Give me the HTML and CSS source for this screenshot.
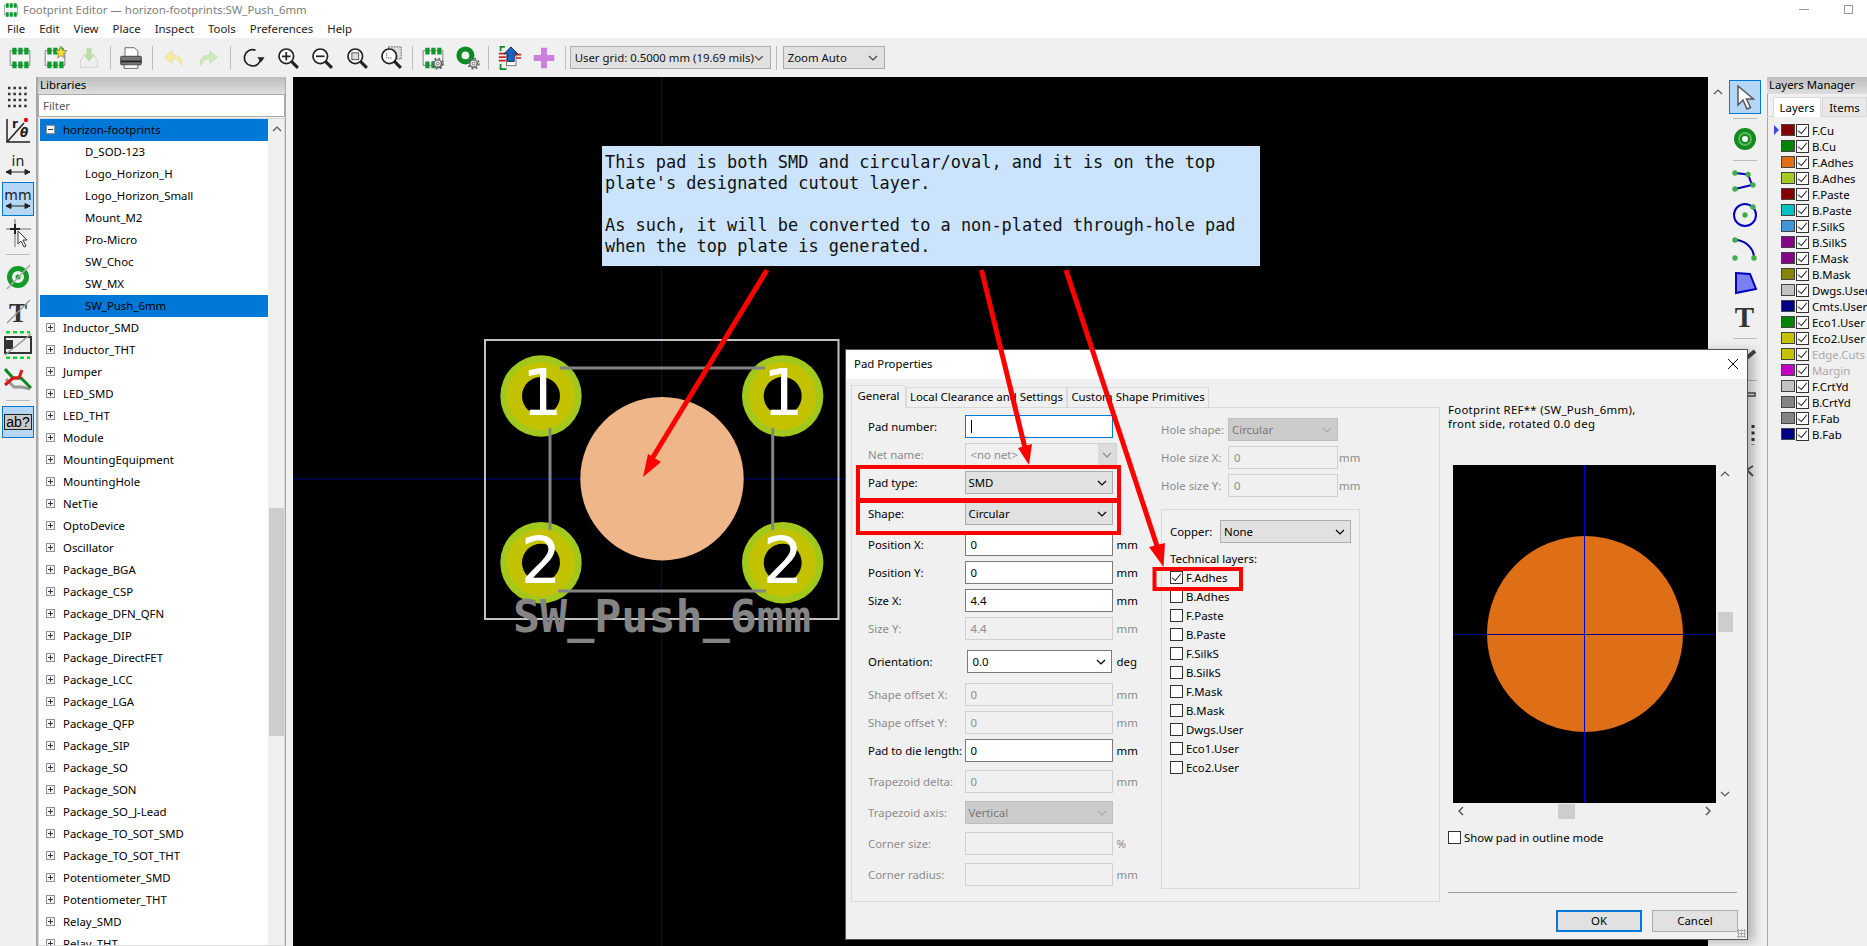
FILE: index.html
```html
<!DOCTYPE html>
<html lang="en">
<head>
    <meta charset="UTF-8">
    <title>Footprint Editor — horizon-footprints:SW_Push_6mm</title>
    <link rel="stylesheet" href="styles.css">
</head>
<body>

<!-- shared icons -->
<svg class="defs" width="0" height="0">
    <symbol id="chev" viewBox="0 0 10 6"><path d="M1 1l4 4 4-4" fill="none" stroke="currentColor" stroke-width="1.2"/></symbol>
    <symbol id="fp" viewBox="0 0 28 28">
        <rect x="2.5" y="5.5" width="23" height="17" fill="#f4f4f4" stroke="#777"/>
        <path d="M5 2h5v8H5zM12 2h5v8h-5zM19 2h5v8h-5zM5 18h5v8H5zM12 18h5v8h-5zM19 18h5v8h-5z" fill="#0c9a2c"/>
    </symbol>
    <symbol id="mag" viewBox="0 0 28 28">
        <circle cx="12" cy="12" r="8.5" fill="#fff" stroke="#222" stroke-width="2"/>
        <path d="M18 18l7.500 7.500" stroke="#222" stroke-width="3.500"/>
    </symbol>
    <symbol id="gear" viewBox="0 0 14 14">
        <circle cx="7" cy="7" r="4" fill="#eee" stroke="#666" stroke-width="1.500"/>
        <circle cx="7" cy="7" r="5.700" fill="none" stroke="#666" stroke-width="2" stroke-dasharray="2 2.500"/>
        <circle cx="7" cy="7" r="1.500" fill="#fff" stroke="#666"/>
    </symbol>
</svg>

<div class="titlebar">
    <svg class="title-icon" width="16" height="16"><use href="#fp"/></svg>
    <span class="title-text">Footprint Editor — horizon-footprints:SW_Push_6mm</span>
    <span class="win-min"></span>
    <span class="win-max"></span>
</div>

<div class="menubar">
    <span>File</span><span>Edit</span><span>View</span><span>Place</span><span>Inspect</span><span>Tools</span><span>Preferences</span><span>Help</span>
</div>

<div class="toolbar">
    <svg class="tb" viewBox="0 0 28 28"><use href="#fp"/></svg>
    <svg class="tb" viewBox="0 0 28 28"><use href="#fp"/><path d="M21 0l2 5 5 .5-4 3.500 1 5-4-2.700-4 2.700 1-5-4-3.500 5-.5z" fill="#f6dc2e" stroke="#555" stroke-width=".6"/></svg>
    <svg class="tb" viewBox="0 0 28 28"><path d="M4 17l4-6h12l4 6v8H4z" fill="#eee" stroke="#ccc"/><path d="M11 2h6v8h4l-7 8-7-8h4z" fill="#bcdcaa"/></svg>
    <span class="sep"></span>
    <svg class="tb" viewBox="0 0 28 28"><path d="M7 2h11l4 4v8H7z" fill="#fff" stroke="#555"/><rect x="2" y="12" width="24" height="10" rx="1" fill="#777" stroke="#333"/><rect x="2" y="17" width="24" height="2" fill="#222"/><rect x="6" y="22" width="16" height="4" fill="#fff" stroke="#555"/></svg>
    <span class="sep"></span>
    <svg class="tb" viewBox="0 0 28 28"><path d="M23 23c1-9-4-13-11-12V6L3 13l9 7v-5c5-1 8 2 11 8z" fill="#f7e8a4" stroke="#eedc90"/></svg>
    <svg class="tb" viewBox="0 0 28 28"><path d="M5 23c-1-9 4-13 11-12V6l9 7-9 7v-5c-5-1-8 2-11 8z" fill="#cfe9bb" stroke="#c0dfa8"/></svg>
    <span class="sep sep-wide"></span>
    <svg class="tb" viewBox="0 0 28 28"><path d="M17 5a9.500 9.500 0 1 0 6 9" fill="none" stroke="#222" stroke-width="2"/><path d="M19 13l4.500 6 4-6z" fill="#222"/></svg>
    <svg class="tb" viewBox="0 0 28 28"><use href="#mag"/><path d="M7 12h10M12 7v10" stroke="#222" stroke-width="2"/></svg>
    <svg class="tb" viewBox="0 0 28 28"><use href="#mag"/><path d="M7 12h10" stroke="#222" stroke-width="2"/></svg>
    <svg class="tb" viewBox="0 0 28 28"><use href="#mag"/><rect x="8" y="8" width="8" height="8" fill="#ddd" stroke="#444"/></svg>
    <svg class="tb" viewBox="0 0 28 28"><rect x="11" y="1" width="15" height="14" fill="#ddd" stroke="#555" stroke-dasharray="2 1"/><use href="#mag"/><path d="M9 8v6h6" fill="none" stroke="#444" stroke-dasharray="1.500 1"/></svg>
    <span class="sep"></span>
    <svg class="tb" viewBox="0 0 28 28"><use href="#fp"/><use href="#gear" x="12" y="13" width="15" height="15"/></svg>
    <svg class="tb" viewBox="0 0 28 28"><circle cx="11" cy="11" r="7.500" fill="none" stroke="#0c8a24" stroke-width="6"/><use href="#gear" x="13" y="13" width="15" height="15"/></svg>
    <span class="sep"></span>
    <svg class="tb" viewBox="0 0 28 28"><path d="M8 1H3v5M3 21v6h7" fill="none" stroke="#0a8a1e" stroke-width="2"/><path d="M1 9h8M1 13h8M1 17h8M20 10h7M20 14h7" stroke="#d02020" stroke-width="2"/><rect x="10" y="11" width="11" height="12" fill="#fff" stroke="#666"/><path d="M15 1l8 8h-4v9h-8V9H7z" fill="#1c62c4" stroke="#123"/></svg>
    <svg class="tb" viewBox="0 0 28 28"><path d="M10.500 2h7v8.500H26v7h-8.500V26h-7v-8.500H2v-7h8.500z" fill="#cc80dd"/></svg>
    <span class="sep sep-last"></span>
    <div class="tb-select grid-select"><span>User grid: 0.5000 mm (19.69 mils)</span><svg width="10" height="6"><use href="#chev"/></svg></div>
    <span class="sep sep-select"></span>
    <div class="tb-select zoom-select"><span>Zoom Auto</span><svg width="10" height="6"><use href="#chev"/></svg></div>
</div>

<div class="main">

    <!-- left tools -->
    <div class="ltool">
        <div class="tool"><svg width="26" height="26" viewBox="0 0 26 26"><path d="M3 4h20M3 10h20M3 16h20M3 22h20" stroke="#333" stroke-width="2.500" stroke-dasharray="2.500 2.900"/></svg></div>
        <div class="tool"><svg width="28" height="28" viewBox="0 0 28 28"><path d="M3 2v23h23M3 25L20 6" fill="none" stroke="#222" stroke-width="1.500"/><text x="8" y="11" class="ic-r">r</text><text x="16" y="20" class="ic-th">θ</text><circle cx="22" cy="3" r="2.200" fill="#e01010"/></svg></div>
        <div class="tool"><svg width="28" height="26" viewBox="0 0 28 26"><text x="14" y="14" class="ic-unit">in</text><path d="M2 20h24M2 20l5-2.500v5zM26 20l-5-2.500v5z" stroke="#222" fill="#222"/></svg></div>
        <div class="tool on"><svg width="28" height="26" viewBox="0 0 28 26"><text x="14" y="14" class="ic-unit">mm</text><path d="M2 20h24M2 20l5-2.500v5zM26 20l-5-2.500v5z" stroke="#222" fill="#222"/></svg></div>
        <div class="tool"><svg width="28" height="30" viewBox="0 0 28 30"><path d="M11 1v28M2 11h25" stroke="#999" stroke-width="1.500"/><path d="M6 11h10M11 6v10" stroke="#222" stroke-width="2"/><path d="M14 13v13l3-3 3 6 2-1-3-6h4z" fill="#fff" stroke="#333"/></svg></div>
        <span class="hsep"></span>
        <div class="tool via-tool"><svg width="28" height="28" viewBox="0 0 28 28"><circle cx="14" cy="14" r="8.500" fill="none" stroke="#129a2a" stroke-width="5"/><circle cx="14" cy="14" r="2.500" fill="#129a2a"/><path d="M3 26L26 2" stroke="#aaa" stroke-width="1.500"/></svg></div>
        <div class="tool"><svg width="28" height="32" viewBox="0 0 28 32"><text x="14" y="27" class="ic-t">T</text><path d="M3 28L26 5" stroke="#999" stroke-width="1.500"/></svg></div>
        <div class="tool"><svg width="30" height="28" viewBox="0 0 30 28"><path d="M3 1h24" stroke="#18d030" stroke-width="3" stroke-dasharray="4 3"/><path d="M3 27h24" stroke="#18d030" stroke-width="3" stroke-dasharray="4 3"/><rect x="2" y="6" width="26" height="16" fill="#eee" stroke="#333" stroke-width="2"/><rect x="3" y="9" width="7" height="9" fill="#333"/><path d="M2 24L28 3" stroke="#999" stroke-width="1.500"/></svg></div>
        <div class="tool"><svg width="28" height="24" viewBox="0 0 28 24"><path d="M2 12l8 8h8l8 2" fill="none" stroke="#999" stroke-width="3"/><path d="M1 2l8 9h8l10 10" fill="none" stroke="#0a8a1e" stroke-width="3"/><path d="M1 18l8-7h6l3-8" fill="none" stroke="#d81818" stroke-width="3"/></svg></div>
        <span class="hsep"></span>
        <div class="tool on ab-tool"><span class="ab">ab?</span></div>
    </div>

    <!-- library tree -->
    <div class="libs">
        <div class="panel-head">Libraries</div>
        <div class="filter">Filter</div>
        <div class="tree">
            <div class="tree-list">
                <div class="node sel"><i class="exp minus"></i>horizon-footprints</div>
                <div class="node child">D_SOD-123</div>
                <div class="node child">Logo_Horizon_H</div>
                <div class="node child">Logo_Horizon_Small</div>
                <div class="node child">Mount_M2</div>
                <div class="node child">Pro-Micro</div>
                <div class="node child">SW_Choc</div>
                <div class="node child">SW_MX</div>
                <div class="node child sel">SW_Push_6mm</div>
                <div class="node"><i class="exp"></i>Inductor_SMD</div>
                <div class="node"><i class="exp"></i>Inductor_THT</div>
                <div class="node"><i class="exp"></i>Jumper</div>
                <div class="node"><i class="exp"></i>LED_SMD</div>
                <div class="node"><i class="exp"></i>LED_THT</div>
                <div class="node"><i class="exp"></i>Module</div>
                <div class="node"><i class="exp"></i>MountingEquipment</div>
                <div class="node"><i class="exp"></i>MountingHole</div>
                <div class="node"><i class="exp"></i>NetTie</div>
                <div class="node"><i class="exp"></i>OptoDevice</div>
                <div class="node"><i class="exp"></i>Oscillator</div>
                <div class="node"><i class="exp"></i>Package_BGA</div>
                <div class="node"><i class="exp"></i>Package_CSP</div>
                <div class="node"><i class="exp"></i>Package_DFN_QFN</div>
                <div class="node"><i class="exp"></i>Package_DIP</div>
                <div class="node"><i class="exp"></i>Package_DirectFET</div>
                <div class="node"><i class="exp"></i>Package_LCC</div>
                <div class="node"><i class="exp"></i>Package_LGA</div>
                <div class="node"><i class="exp"></i>Package_QFP</div>
                <div class="node"><i class="exp"></i>Package_SIP</div>
                <div class="node"><i class="exp"></i>Package_SO</div>
                <div class="node"><i class="exp"></i>Package_SON</div>
                <div class="node"><i class="exp"></i>Package_SO_J-Lead</div>
                <div class="node"><i class="exp"></i>Package_TO_SOT_SMD</div>
                <div class="node"><i class="exp"></i>Package_TO_SOT_THT</div>
                <div class="node"><i class="exp"></i>Potentiometer_SMD</div>
                <div class="node"><i class="exp"></i>Potentiometer_THT</div>
                <div class="node"><i class="exp"></i>Relay_SMD</div>
                <div class="node"><i class="exp"></i>Relay_THT</div>
            </div>
            <div class="tree-scroll">
                <svg class="up" width="10" height="6"><use href="#chev"/></svg>
                <div class="tree-thumb"></div>
            </div>
        </div>
    </div>
    <div class="sash"></div>

    <!-- board canvas, drawn in page coordinates -->
    <div class="canvas">
        <svg class="board" width="1415" height="869" viewBox="293 77 1415 869">
            <path d="M661.500 77V946M293 479H1708" stroke="#000084" stroke-width="1"/>
            <rect x="485" y="340" width="353.500" height="279" fill="none" stroke="#c2c2c2" stroke-width="2"/>
            <circle cx="662" cy="478.700" r="81.700" fill="#efb68a"/>
            <g class="pad"><circle cx="541" cy="396" r="40.700"/><circle class="ring" cx="541" cy="396" r="34"/><circle class="hole" cx="541" cy="396" r="19"/></g>
            <g class="pad"><circle cx="782.700" cy="396" r="40.700"/><circle class="ring" cx="782.700" cy="396" r="34"/><circle class="hole" cx="782.700" cy="396" r="19"/></g>
            <g class="pad"><circle cx="541" cy="562.700" r="40.700"/><circle class="ring" cx="541" cy="562.700" r="34"/><circle class="hole" cx="541" cy="562.700" r="19"/></g>
            <g class="pad"><circle cx="782.700" cy="562.700" r="40.700"/><circle class="ring" cx="782.700" cy="562.700" r="34"/><circle class="hole" cx="782.700" cy="562.700" r="19"/></g>
            <path d="M560 368H765M558 591H766M550 428V530M772.700 428V530" stroke="#848484" stroke-width="3"/>
            <text class="pad-num" x="542" y="415">1</text>
            <text class="pad-num" x="783" y="415">1</text>
            <text class="pad-num" x="541" y="583">2</text>
            <text class="pad-num" x="783" y="583">2</text>
            <text class="fp-name" x="513" y="632">SW_Push_6mm</text>
        </svg>
        <div class="note">This pad is both SMD and circular/oval, and it is on the top
plate's designated cutout layer.

As such, it will be converted to a non-plated through-hole pad
when the top plate is generated.</div>
    </div>

    <div class="cscroll"><svg width="10" height="6"><use href="#chev"/></svg></div>

    <!-- right tools -->
    <div class="rtool">
        <div class="tool on"><svg width="24" height="28" viewBox="0 0 24 28"><path d="M5 3v19l5-5 4 9 3.500-1.500-4-8.500h7z" fill="#fff" stroke="#555" stroke-width="1.500"/></svg></div>
        <span class="hsep"></span>
        <div class="tool"><svg width="28" height="28" viewBox="0 0 28 28"><circle cx="14" cy="14" r="9" fill="#5cb85c" stroke="#128a1e" stroke-width="4"/><circle cx="14" cy="14" r="4" fill="#fff" stroke="#128a1e" stroke-width="2"/></svg></div>
        <span class="hsep"></span>
        <div class="tool"><svg width="28" height="24" viewBox="0 0 28 24"><path d="M4 4l13 1.500L21 16 4 20" fill="none" stroke="#0000c0" stroke-width="2"/><g class="node-dot"><circle cx="4" cy="4" r="2.700"/><circle cx="17" cy="5.500" r="2.700"/><circle cx="22" cy="16" r="2.700"/><circle cx="4" cy="20" r="2.700"/></g></svg></div>
        <div class="tool"><svg width="28" height="28" viewBox="0 0 28 28"><circle cx="14" cy="14" r="11" fill="none" stroke="#0000c0" stroke-width="2"/><g class="node-dot"><circle cx="14" cy="14" r="2.700"/><circle cx="22" cy="6" r="2.700"/></g></svg></div>
        <div class="tool"><svg width="28" height="26" viewBox="0 0 28 26"><path d="M4 4c10 0 19 8 19 18" fill="none" stroke="#0000c0" stroke-width="2"/><g class="node-dot"><circle cx="4" cy="4" r="2.700"/><circle cx="4" cy="22" r="2.700"/><circle cx="23" cy="22" r="2.700"/></g></svg></div>
        <div class="tool"><svg width="28" height="24" viewBox="0 0 28 24"><path d="M5 2l14 1 6 15L5 22z" fill="#7a80f4" stroke="#0000c0" stroke-width="2"/></svg></div>
        <div class="tool"><span class="big-t">T</span></div>
        <span class="hsep"></span>
        <div class="tool"><svg width="28" height="26" viewBox="0 0 28 26"><path d="M5 21L24 5" stroke="#444" stroke-width="4"/></svg></div>
        <span class="hsep"></span>
        <div class="tool"><svg width="28" height="26" viewBox="0 0 28 26"><path d="M6 5h18v3H6zM9 8v16h6V8" fill="none" stroke="#444" stroke-width="1.500"/></svg></div>
        <div class="tool"><svg width="28" height="26" viewBox="0 0 28 26"><path d="M22 3v20M13 3v20" stroke="#333" stroke-width="3" stroke-dasharray="3 3.500"/></svg></div>
        <div class="tool"><svg width="28" height="26" viewBox="0 0 28 26"><path d="M6 4l16 16M6 20L22 10" stroke="#555" stroke-width="2"/></svg></div>
    </div>

    <!-- layers manager -->
    <div class="layers">
        <div class="panel-head">Layers Manager</div>
        <div class="ltabs"><span class="ltab active">Layers</span><span class="ltab">Items</span></div>
        <div class="llist">
            <div class="lrow cur"><i class="sw c-red"></i><i class="cb on"></i>F.Cu</div>
            <div class="lrow"><i class="sw c-green"></i><i class="cb on"></i>B.Cu</div>
            <div class="lrow"><i class="sw c-orange"></i><i class="cb on"></i>F.Adhes</div>
            <div class="lrow"><i class="sw c-lime"></i><i class="cb on"></i>B.Adhes</div>
            <div class="lrow"><i class="sw c-red"></i><i class="cb on"></i>F.Paste</div>
            <div class="lrow"><i class="sw c-cyan"></i><i class="cb on"></i>B.Paste</div>
            <div class="lrow"><i class="sw c-sky"></i><i class="cb on"></i>F.SilkS</div>
            <div class="lrow"><i class="sw c-purple"></i><i class="cb on"></i>B.SilkS</div>
            <div class="lrow"><i class="sw c-purple"></i><i class="cb on"></i>F.Mask</div>
            <div class="lrow"><i class="sw c-olive"></i><i class="cb on"></i>B.Mask</div>
            <div class="lrow"><i class="sw c-silver"></i><i class="cb on"></i>Dwgs.User</div>
            <div class="lrow"><i class="sw c-navy"></i><i class="cb on"></i>Cmts.User</div>
            <div class="lrow"><i class="sw c-green"></i><i class="cb on"></i>Eco1.User</div>
            <div class="lrow"><i class="sw c-yellow"></i><i class="cb on"></i>Eco2.User</div>
            <div class="lrow dim"><i class="sw c-yellow"></i><i class="cb on"></i>Edge.Cuts</div>
            <div class="lrow dim"><i class="sw c-magenta"></i><i class="cb on"></i>Margin</div>
            <div class="lrow"><i class="sw c-silver"></i><i class="cb on"></i>F.CrtYd</div>
            <div class="lrow"><i class="sw c-gray"></i><i class="cb on"></i>B.CrtYd</div>
            <div class="lrow"><i class="sw c-gray"></i><i class="cb on"></i>F.Fab</div>
            <div class="lrow"><i class="sw c-navy"></i><i class="cb on"></i>B.Fab</div>
        </div>
    </div>
</div>

<!-- Pad Properties window -->
<div class="dialog">
    <div class="dlg-title"><span>Pad Properties</span><svg width="14" height="14"><path d="M2 2l10 10M12 2L2 12" stroke="#111"/></svg></div>
    <div class="dlg-body">
        <div class="dlg-left">
            <div class="tabs">
                <span class="tab active">General</span>
                <span class="tab t-local">Local Clearance and Settings</span>
                <span class="tab t-custom">Custom Shape Primitives</span>
            </div>
            <div class="tab-panel">
                <div class="col-form">
                    <div class="row"><label>Pad number:</label><div class="ctl focus"><i class="caret"></i></div></div>
                    <div class="row off"><label>Net name:</label><div class="ctl combo wide">&lt;no net&gt;<b><svg width="10" height="6"><use href="#chev"/></svg></b></div></div>
                    <div class="row"><label>Pad type:</label><div class="ctl sel-ctl">SMD<svg width="10" height="6"><use href="#chev"/></svg></div></div>
                    <div class="row g8"><label>Shape:</label><div class="ctl sel-ctl">Circular<svg width="10" height="6"><use href="#chev"/></svg></div></div>
                    <div class="row g8"><label>Position X:</label><div class="ctl">0</div><em>mm</em></div>
                    <div class="row"><label>Position Y:</label><div class="ctl">0</div><em>mm</em></div>
                    <div class="row"><label>Size X:</label><div class="ctl">4.4</div><em>mm</em></div>
                    <div class="row off"><label>Size Y:</label><div class="ctl">4.4</div><em>mm</em></div>
                    <div class="row g10"><label>Orientation:</label><div class="ctl orient">0.0<svg width="10" height="6"><use href="#chev"/></svg></div><em>deg</em></div>
                    <div class="row g10 off"><label>Shape offset X:</label><div class="ctl">0</div><em>mm</em></div>
                    <div class="row off"><label>Shape offset Y:</label><div class="ctl">0</div><em>mm</em></div>
                    <div class="row"><label>Pad to die length:</label><div class="ctl">0</div><em>mm</em></div>
                    <div class="row g8 off"><label>Trapezoid delta:</label><div class="ctl">0</div><em>mm</em></div>
                    <div class="row g8 off"><label>Trapezoid axis:</label><div class="ctl sel-ctl">Vertical<svg width="10" height="6"><use href="#chev"/></svg></div></div>
                    <div class="row g8 off"><label>Corner size:</label><div class="ctl"></div><em>%</em></div>
                    <div class="row g8 off"><label>Corner radius:</label><div class="ctl"></div><em>mm</em></div>
                </div>
                <div class="col-mid">
                    <div class="row2 off"><label>Hole shape:</label><div class="ctl sel-ctl">Circular<svg width="10" height="6"><use href="#chev"/></svg></div></div>
                    <div class="row2 off"><label>Hole size X:</label><div class="ctl">0</div><em>mm</em></div>
                    <div class="row2 off"><label>Hole size Y:</label><div class="ctl">0</div><em>mm</em></div>
                    <div class="layer-box">
                        <div class="copper"><label>Copper:</label><div class="ctl sel-ctl">None<svg width="10" height="6"><use href="#chev"/></svg></div></div>
                        <div class="tech">Technical layers:</div>
                        <div class="chk"><i class="cb on"></i>F.Adhes</div>
                        <div class="chk"><i class="cb"></i>B.Adhes</div>
                        <div class="chk"><i class="cb"></i>F.Paste</div>
                        <div class="chk"><i class="cb"></i>B.Paste</div>
                        <div class="chk"><i class="cb"></i>F.SilkS</div>
                        <div class="chk"><i class="cb"></i>B.SilkS</div>
                        <div class="chk"><i class="cb"></i>F.Mask</div>
                        <div class="chk"><i class="cb"></i>B.Mask</div>
                        <div class="chk"><i class="cb"></i>Dwgs.User</div>
                        <div class="chk"><i class="cb"></i>Eco1.User</div>
                        <div class="chk"><i class="cb"></i>Eco2.User</div>
                    </div>
                </div>
            </div>
        </div>
        <div class="dlg-right">
            <div class="pv-text">Footprint REF** (SW_Push_6mm),<br>front side, rotated 0.0 deg</div>
            <div class="pv">
                <svg class="pv-canvas" width="263" height="338" viewBox="0 0 263 338">
                    <circle cx="132" cy="169" r="98" fill="#de6f17"/>
                    <path d="M131.500 0V338" stroke="#0000d0"/>
                    <path d="M0 169.500H263" stroke="#000090"/>
                </svg>
                <div class="pv-vs">
                    <svg class="cv-up" width="10" height="6"><use href="#chev"/></svg>
                    <div class="pv-vthumb"></div>
                    <svg class="cv-down" width="10" height="6"><use href="#chev"/></svg>
                </div>
            </div>
            <div class="pv-hs">
                <svg class="cv-left" width="6" height="10"><path d="M5 1L1 5l4 4" fill="none" stroke="#555" stroke-width="1.500"/></svg>
                <div class="pv-hthumb"></div>
                <svg class="cv-right" width="6" height="10"><path d="M1 1l4 4-4 4" fill="none" stroke="#555" stroke-width="1.500"/></svg>
            </div>
            <div class="chk outline"><i class="cb"></i>Show pad in outline mode</div>
            <div class="dlg-rule"></div>
            <div class="dlg-btns"><span class="btn ok">OK</span><span class="btn">Cancel</span></div>
        </div>
    </div>
    <span class="grip"></span>
</div>

<!-- red markup over everything, it is a free drawing on top of the screenshot -->
<svg class="markup" width="1867" height="946" viewBox="0 0 1867 946">
    <path d="M767 270L650 462M981.500 270L1025 448M1066 270L1157 546" stroke="#ff0000" stroke-width="5" fill="none"/>
    <path d="M643 477L648 454L661 462zM1029 465L1018 448L1032 444zM1163.500 567L1149 547L1165 543z" fill="#ff0000"/>
    <rect x="858" y="467" width="261" height="33" fill="none" stroke="#ff0000" stroke-width="4"/>
    <rect x="858" y="501" width="261" height="32" fill="none" stroke="#ff0000" stroke-width="4"/>
    <rect x="1154.500" y="569" width="86.500" height="20" fill="none" stroke="#ff0000" stroke-width="4"/>
</svg>

</body>
</html>
```

FILE: styles.css
```css
* {
    box-sizing: border-box;
}
html, body {
    margin: 0;
    padding: 0;
}
body {
    width: 1867px;
    height: 946px;
    overflow: hidden;
    position: relative;
    font-family: "Noto Sans", "Open Sans", sans-serif;
    font-size: 11.4px;
    color: #000;
    background-color: #f0f0f0;
}
.defs {
    position: absolute;
}

/* top of the window */
.titlebar {
    height: 19px;
    background-color: #fff;
    display: flex;
    align-items: center;
    padding: 0 14px 0 3px;
    color: #7d7d7d;
}
.title-icon {
    margin-right: 4px;
}
.win-min {
    width: 10px;
    height: 1px;
    background-color: #999;
    margin-left: auto;
}
.win-max {
    width: 9px;
    height: 9px;
    border: 1px solid #999;
    margin-left: 35px;
}
.menubar {
    height: 19px;
    background-color: #fff;
    display: flex;
    gap: 14px;
    align-items: center;
    padding-left: 7px;
    color: #222;
}
.toolbar {
    height: 39px;
    background-color: #f0f0f0;
    display: flex;
    align-items: center;
    padding-left: 3px;
}
.tb {
    width: 24px;
    height: 24px;
    margin: 0 5.2px;
    flex: none;
}
.sep {
    width: 1px;
    height: 24px;
    background-color: #bbb;
    margin: 0 3.5px;
    flex: none;
}
.sep-wide {
    margin: 0 5.5px 0 4.5px;
}
.sep-select {
    height: 24px;
    margin: 0 5.5px;
}
.tb-select {
    height: 23px;
    background-color: #e1e1e1;
    border: 1px solid #adadad;
    display: flex;
    align-items: center;
    justify-content: space-between;
    padding: 0 6px 0 4px;
    flex: none;
    color: #111;
    white-space: nowrap;
}
.tb-select svg {
    color: #444;
}
.grid-select {
    width: 201px;
}
.zoom-select {
    width: 102px;
}

/* main row */
.main {
    display: flex;
    height: 869px;
}
.ltool {
    width: 36px;
    padding-top: 3px;
    display: flex;
    flex-direction: column;
    align-items: center;
    flex: none;
}
.tool {
    width: 32px;
    height: 34px;
    display: flex;
    align-items: center;
    justify-content: center;
    flex: none;
}
.tool.on {
    background-color: #b5d7f5;
    outline: 1px solid #0078d7;
    outline-offset: -1px;
}
.via-tool {
    margin-top: 2px;
}
.ab-tool {
    margin-top: 2px;
    height: 32px;
}
.hsep {
    width: 24px;
    height: 1px;
    background-color: #bbb;
    margin: 4px 0 3px;
    flex: none;
}
.ab {
    font-family: "Liberation Sans", sans-serif;
    font-size: 14px;
    line-height: 14px;
    background-color: #c8c8c8;
    border: 1px solid #222;
    padding: 0 1px;
}
.ic-r {
    font: bold 12px "DejaVu Sans", sans-serif;
    fill: #222;
}
.ic-th {
    font: italic bold 12px "DejaVu Sans", sans-serif;
    fill: #222;
}
.ic-unit {
    font: 14px "DejaVu Sans", sans-serif;
    fill: #222;
    text-anchor: middle;
}
.ic-t {
    font: bold 27px "Liberation Serif", serif;
    fill: #333;
    text-anchor: middle;
}
.big-t {
    font: bold 29px "Liberation Serif", serif;
    color: #333;
}
.node-dot circle {
    fill: #3fae49;
}

/* library tree */
.libs {
    width: 250px;
    border-left: 2px solid #a8a8a8;
    border-right: 1px solid #a8a8a8;
    display: flex;
    flex-direction: column;
    flex: none;
}
.panel-head {
    height: 17px;
    line-height: 16px;
    padding-left: 2px;
    background: linear-gradient(#bdbdbd, #dedede);
    white-space: nowrap;
    flex: none;
}
.filter {
    height: 23px;
    line-height: 21px;
    background-color: #fff;
    border: 1px solid #aaa;
    padding-left: 4px;
    color: #555;
    flex: none;
}
.tree {
    flex: 1;
    display: flex;
    margin-top: 1px;
    border: 1px solid #d9d9d9;
    padding: 0 0 0 1px;
    overflow: hidden;
    background-color: #fff;
}
.tree-list {
    width: 228px;
    background-color: #fff;
    flex: none;
}
.node {
    height: 22px;
    padding: 0 0 2px 6px;
    display: flex;
    align-items: center;
    white-space: nowrap;
}
.node.child {
    padding-left: 45px;
}
.node.sel {
    background-color: #0078d7;
}
.exp {
    width: 9px;
    height: 9px;
    border: 1px solid #909090;
    background: linear-gradient(#333, #333) center / 5px 1px no-repeat,
                linear-gradient(#333, #333) center / 1px 5px no-repeat,
                #f4f4f4;
    margin-right: 8px;
    flex: none;
}
.exp.minus {
    background: linear-gradient(#333, #333) center / 5px 1px no-repeat, #f4f4f4;
}
.tree-scroll {
    width: 18px;
    background-color: #f0f0f0;
    display: flex;
    flex-direction: column;
    align-items: center;
    flex: none;
}
.tree-scroll .up {
    transform: rotate(180deg);
    margin-top: 7px;
    color: #555;
}
.tree-thumb {
    width: 16px;
    height: 228px;
    background-color: #cdcdcd;
    margin-top: 376px;
}
.sash {
    width: 7px;
    flex: none;
}

/* board */
.canvas {
    width: 1415px;
    background-color: #000;
    position: relative;
    overflow: hidden;
    flex: none;
}
.board {
    display: block;
}
.pad circle {
    fill: #a2c81c;
}
.pad .ring {
    fill: #c2c200;
}
.pad .hole {
    fill: #000;
}
.pad-num {
    font: 64px "DejaVu Sans", sans-serif;
    fill: #fff;
    text-anchor: middle;
}
.fp-name {
    font: bold 45px "DejaVu Sans Mono", monospace;
    fill: #848484;
}
.note {
    position: absolute;
    left: 309px;
    top: 69px;
    width: 658px;
    height: 120px;
    padding: 6px 0 0 3px;
    background-color: #cbe4fc;
    font: 16.9px/21px "DejaVu Sans Mono", monospace;
    white-space: pre;
    color: #111;
}
.cscroll {
    width: 19px;
    padding-top: 6px;
    text-align: center;
    color: #555;
    flex: none;
}
.cscroll svg {
    transform: rotate(180deg);
}
.rtool {
    width: 35px;
    padding-top: 3px;
    display: flex;
    flex-direction: column;
    align-items: center;
    flex: none;
}

/* layers */
.layers {
    width: 105px;
    border-left: 5px solid #f0f0f0;
    overflow: hidden;
    flex: none;
    box-shadow: inset 1px 0 0 #a8a8a8;
}
.ltabs {
    display: flex;
    height: 23px;
    padding: 3px 0 0 6px;
    border-bottom: 1px solid #d9d9d9;
}
.ltab {
    width: 45px;
    height: 20px;
    line-height: 19px;
    text-align: center;
    background-color: #e8e8e8;
    border: 1px solid #d9d9d9;
    margin-left: 1px;
}
.ltab.active {
    width: 48px;
    margin-left: 0;
    background-color: #fff;
    border-bottom: none;
}
.llist {
    padding-top: 5px;
}
.lrow {
    height: 16px;
    display: flex;
    align-items: center;
    padding-left: 14px;
    white-space: nowrap;
}
.lrow.cur::before {
    content: "";
    border-left: 5px solid #3a46f0;
    border-top: 5px solid transparent;
    border-bottom: 5px solid transparent;
    margin: 0 2px 0 -7px;
}
.lrow.dim {
    color: #aaa;
}
.sw {
    width: 14px;
    height: 12px;
    border: 1px solid #444;
    flex: none;
}
.lrow .cb {
    margin: 0 3px 0 1px;
}
.c-red { background-color: #840000; }
.c-green { background-color: #008400; }
.c-orange { background-color: #df6e15; }
.c-lime { background-color: #a4cb20; }
.c-cyan { background-color: #00c2c2; }
.c-sky { background-color: #4295d8; }
.c-purple { background-color: #840084; }
.c-olive { background-color: #848400; }
.c-silver { background-color: #c2c2c2; }
.c-navy { background-color: #000084; }
.c-yellow { background-color: #c2c200; }
.c-magenta { background-color: #c200c2; }
.c-gray { background-color: #848484; }

.cb {
    width: 13px;
    height: 13px;
    border: 1px solid #333;
    background-color: #fff;
    display: flex;
    align-items: center;
    justify-content: center;
    flex: none;
}
.cb.on::after {
    content: "";
    width: 4px;
    height: 8px;
    border: solid #333;
    border-width: 0 1.3px 1.3px 0;
    transform: rotate(40deg) translate(-1px, -1px);
}

/* dialog */
.dialog {
    position: absolute;
    left: 845px;
    top: 349px;
    width: 903px;
    height: 591px;
    background-color: #f0f0f0;
    border: 1px solid #555;
    box-shadow: 6px 2px 10px rgba(0, 0, 0, 0.25);
    display: flex;
    flex-direction: column;
}
.dlg-title {
    height: 29px;
    background-color: #fff;
    display: flex;
    align-items: center;
    justify-content: space-between;
    padding: 0 7px 2px 8px;
    flex: none;
}
.dlg-body {
    flex: 1;
    display: flex;
}
.dlg-left {
    width: 594px;
    padding: 5px 0 0 5px;
    flex: none;
}
.tabs {
    display: flex;
    align-items: flex-end;
    height: 23px;
}
.tab {
    height: 20px;
    line-height: 18px;
    border: 1px solid #d9d9d9;
    border-bottom: none;
    white-space: nowrap;
    text-align: center;
}
.tab.active {
    width: 55px;
    height: 23px;
    line-height: 20px;
    position: relative;
    top: 1px;
    background-color: #f0f0f0;
    z-index: 1;
}
.t-local {
    width: 161px;
}
.t-custom {
    width: 142px;
}
.tab-panel {
    width: 589px;
    height: 495px;
    border: 1px solid #d9d9d9;
    display: flex;
}
.col-form {
    width: 309px;
    padding: 7px 0 0 16px;
    flex: none;
}
.row {
    display: flex;
    align-items: center;
    height: 23px;
    margin-bottom: 5px;
}
.row.g8 {
    margin-top: 8px;
}
.row:has(+ .g8) {
    margin-bottom: 0;
}
.row:has(+ .g10) {
    margin-bottom: 0;
}
.row.g10 {
    margin-top: 10px;
}
.row label {
    width: 96.5px;
    white-space: nowrap;
    flex: none;
}
.row em, .row2 em {
    font-style: normal;
    margin-left: 4px;
}
.ctl {
    width: 148px;
    height: 23px;
    line-height: 20px;
    background-color: #fff;
    border: 1px solid #7a7a7a;
    padding-left: 5px;
    display: flex;
    align-items: center;
    flex: none;
}
.ctl.focus {
    border-color: #0078d7;
}
.caret {
    width: 1px;
    height: 13px;
    background-color: #000;
}
.sel-ctl {
    background-color: #e1e1e1;
    border-color: #adadad;
    justify-content: space-between;
    padding-left: 3px;
    padding-right: 5px;
}
.orient {
    width: 145px;
    margin-left: 2px;
    justify-content: space-between;
    padding-right: 5px;
    margin-right: 1px;
}
.combo.wide {
    width: 152px;
    padding-right: 0;
    justify-content: space-between;
}
.combo b {
    width: 18px;
    height: 21px;
    background-color: #dcdcdc;
    display: flex;
    align-items: center;
    justify-content: center;
}
.off {
    color: #8c8c8c;
}
.off .ctl {
    background-color: #f0f0f0;
    border-color: #d0d0d0;
    color: #8c8c8c;
}
.off .sel-ctl {
    background-color: #cccccc;
    border-color: #bfbfbf;
    color: #777;
}
.off .sel-ctl svg {
    color: #aaa;
}
.col-mid {
    width: 199px;
    padding-top: 10px;
    flex: none;
}
.row2 {
    display: flex;
    align-items: center;
    height: 23px;
    margin-bottom: 5px;
}
.row2 label {
    width: 67px;
    white-space: nowrap;
    flex: none;
}
.row2 .ctl {
    width: 110px;
}
.row2 em {
    margin-left: 1px;
}
.layer-box {
    width: 199px;
    height: 380px;
    margin-top: 12px;
    border: 1px solid #d9d9d9;
    padding: 9px 0 0 8px;
}
.copper {
    display: flex;
    align-items: center;
    height: 23px;
    margin-top: 1px;
}
.copper label {
    width: 50px;
    flex: none;
}
.copper .ctl {
    width: 131px;
}
.tech {
    height: 16px;
    line-height: 16px;
    margin-top: 8px;
    margin-bottom: 1px;
}
.chk {
    height: 19px;
    display: flex;
    align-items: center;
    gap: 3px;
    white-space: nowrap;
}
.dlg-right {
    flex: 1;
    padding: 25px 0 0 8px;
    min-width: 0;
}
.pv-text {
    line-height: 14px;
    height: 60px;
    margin-top: -1px;
    letter-spacing: 0.3px;
}
.pv {
    display: flex;
    margin-left: 5px;
    margin-top: 2px;
}
.pv-canvas {
    background-color: #000;
    display: block;
    flex: none;
}
.pv-vs {
    width: 16px;
    height: 338px;
    margin-left: 1px;
    display: flex;
    flex-direction: column;
    align-items: center;
    color: #555;
}
.cv-up {
    transform: rotate(180deg);
    margin-top: 6px;
}
.pv-vthumb {
    width: 15px;
    height: 20px;
    background-color: #cdcdcd;
    margin-top: 135px;
}
.cv-down {
    margin-top: 159px;
}
.pv-hs {
    width: 263px;
    height: 16px;
    margin-left: 5px;
    display: flex;
    align-items: center;
}
.cv-left {
    margin-left: 5px;
}
.pv-hthumb {
    width: 17px;
    height: 15px;
    background-color: #cdcdcd;
    margin-left: 94px;
}
.cv-right {
    margin-left: 130px;
}
.chk.outline {
    margin-top: 9px;
}
.dlg-rule {
    width: 289px;
    height: 1px;
    background-color: #a0a0a0;
    margin-top: 45px;
}
.dlg-btns {
    display: flex;
    gap: 10px;
    margin: 17px 0 0 108px;
}
.btn {
    width: 86px;
    height: 22px;
    line-height: 20px;
    text-align: center;
    background-color: #e1e1e1;
    border: 1px solid #adadad;
}
.btn.ok {
    border: 2px solid #0078d7;
    line-height: 18px;
}
.grip {
    position: absolute;
    right: 1px;
    bottom: 1px;
    width: 9px;
    height: 9px;
    background: radial-gradient(circle, #aaa 1px, transparent 1.2px) 0 0 / 3px 3px;
}
.markup {
    position: absolute;
    left: 0;
    top: 0;
    pointer-events: none;
}
```
